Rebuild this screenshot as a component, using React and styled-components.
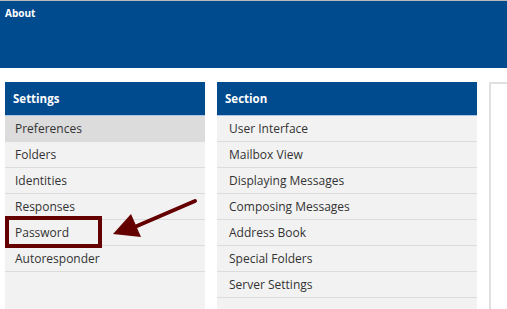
import React from "react";
import styled, { createGlobalStyle } from "styled-components";

const Global = createGlobalStyle`
  html, body { margin: 0; padding: 0; background: #fff; }
  body { font-family: "Open Sans", "Noto Sans", sans-serif; overflow: hidden; }
`;

const Page = styled.div`
  height: 309px;
  display: flex;
  flex-direction: column;
  overflow: hidden;
`;

const TopBar = styled.header`
  height: 68px;
  border-top: 1px solid #b8b8b8;
  background: #004a8e;
  color: #fff;
  font-size: 10px;
  font-weight: 700;
  padding: 5px 0 0 5px;
  box-sizing: border-box;
  flex: none;
`;

const Columns = styled.main`
  flex: 1;
  display: flex;
  gap: 12px;
  padding: 14px 0 0 5px;
  min-height: 0;
`;

const Panel = styled.section`
  position: relative;
  width: ${(p) => p.$w}px;
  flex: none;
  background: #f2f2f2;
  display: flex;
  flex-direction: column;
`;

const PanelHeader = styled.div`
  height: 33px;
  background: #004a8e;
  border-bottom: 1px solid #a9c6e8;
  color: #fff;
  font-size: 11.5px;
  font-weight: 700;
  display: flex;
  align-items: center;
  padding-left: 8px;
  box-sizing: content-box;
`;

const Row = styled.div`
  height: 25px;
  border-bottom: 1px solid #dcdcdc;
  background: ${(p) => (p.$active ? "#dcdcdc" : "#f2f2f2")};
  color: #333;
  font-size: 12px;
  display: flex;
  align-items: center;
  padding-left: ${(p) => p.$pad}px;
`;

const Detail = styled.section`
  flex: 1;
  border-top: 2px solid #e0e0e0;
  border-left: 2px solid #e0e0e0;
  background: #fff;
`;

const Highlight = styled.div`
  position: absolute;
  left: 0;
  top: 134px;
  width: 97px;
  height: 32px;
  box-sizing: border-box;
  border: 4px solid #650000;
  pointer-events: none;
`;

const Arrow = styled.svg`
  position: absolute;
  left: 95px;
  top: 110px;
  overflow: visible;
`;

const settings = ["Preferences", "Folders", "Identities", "Responses", "Password", "Autoresponder"];
const sections = [
  "User Interface",
  "Mailbox View",
  "Displaying Messages",
  "Composing Messages",
  "Address Book",
  "Special Folders",
  "Server Settings",
];

export default function App() {
  return (
    <Page>
      <Global />
      <TopBar>About</TopBar>
      <Columns>
        <Panel $w={200}>
          <PanelHeader>Settings</PanelHeader>
          {settings.map((s, i) => (
            <Row key={s} $pad={10} $active={i === 0}>
              {s}
            </Row>
          ))}
          <Highlight />
          <Arrow width="100" height="50" viewBox="0 0 100 50">
            <line x1="95" y1="9" x2="30" y2="37" stroke="#650000" strokeWidth="4" strokeLinecap="round" />
            <polygon points="13,42 31,22 41,45" fill="#650000" />
          </Arrow>
        </Panel>
        <Panel $w={260}>
          <PanelHeader>Section</PanelHeader>
          {sections.map((s) => (
            <Row key={s} $pad={12}>
              {s}
            </Row>
          ))}
        </Panel>
        <Detail />
      </Columns>
    </Page>
  );
}
